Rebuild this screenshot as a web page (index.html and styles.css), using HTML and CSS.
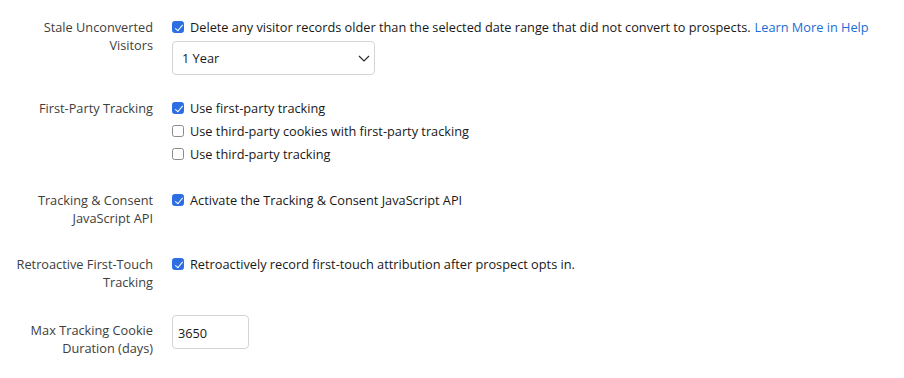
FILE: index.html
```html
<!DOCTYPE html>
<html lang="en">
<head>
<meta charset="utf-8">
<title>Tracking Settings</title>
<link rel="stylesheet" href="styles.css">
</head>
<body>
<div class="form">
  <div class="row">
    <div class="label">Stale Unconverted<br>Visitors</div>
    <div class="control">
      <label class="option"><span class="box checked"></span>Delete any visitor records older than the selected date range that did not convert to prospects. <a class="link" href="#">Learn More in Help</a></label>
      <div class="select">
        <span>1 Year</span>
        <svg class="chev" width="12" height="7" viewBox="0 0 12 7"><path d="M1 1l5 5 5-5" fill="none" stroke="#2b2b2b" stroke-width="1.2"/></svg>
      </div>
    </div>
  </div>
  <div class="row">
    <div class="label">First-Party Tracking</div>
    <div class="control options">
      <label class="option"><span class="box checked"></span>Use first-party tracking</label>
      <label class="option"><span class="box"></span>Use third-party cookies with first-party tracking</label>
      <label class="option"><span class="box"></span>Use third-party tracking</label>
    </div>
  </div>
  <div class="row spaced">
    <div class="label">Tracking &amp; Consent<br>JavaScript API</div>
    <div class="control">
      <label class="option"><span class="box checked"></span>Activate the Tracking &amp; Consent JavaScript API</label>
    </div>
  </div>
  <div class="row spaced">
    <div class="label">Retroactive First-Touch<br>Tracking</div>
    <div class="control">
      <label class="option"><span class="box checked"></span>Retroactively record first-touch attribution after prospect opts in.</label>
    </div>
  </div>
  <div class="row last">
    <div class="label label-input">Max Tracking Cookie<br>Duration (days)</div>
    <div class="control">
      <div class="input">3650</div>
    </div>
  </div>
</div>
</body>
</html>
```

FILE: styles.css
```css
* { box-sizing: border-box; }
html, body { margin: 0; padding: 0; background: #ffffff; }
body {
  font-family: "Open Sans", "Liberation Sans", sans-serif;
  font-size: 12.75px;
  line-height: 18px;
  color: #181818;
}
.form {
  display: flex;
  flex-direction: column;
  gap: 24px;
  padding-top: 18px;
}
.row {
  display: grid;
  grid-template-columns: 153px 1fr;
  column-gap: 19px;
  align-items: start;
}
.row.spaced { margin-top: 4px; }
.label {
  text-align: right;
  color: #3e3e3c;
}
.label-input { padding-top: 6px; }
.control { display: flex; flex-direction: column; align-items: flex-start; }
.options { gap: 5px; }
.option {
  display: flex;
  align-items: center;
  white-space: nowrap;
}
.box {
  width: 12px;
  height: 12px;
  border: 1px solid #8a8a8a;
  border-radius: 2.5px;
  margin-right: 6px;
  flex: none;
  background: #fff;
  position: relative;
}
.box.checked {
  background: #2d6fe3;
  border-color: #2d6fe3;
}
.box.checked::after {
  content: "";
  position: absolute;
  left: 3.5px;
  top: 0.5px;
  width: 3px;
  height: 7px;
  border-right: 1.8px solid #fff;
  border-bottom: 1.8px solid #fff;
  transform: rotate(40deg);
}
.link {
  color: #1b6dd6;
  text-decoration: none;
  margin-left: 4px;
}
.select {
  margin-top: 5px;
  width: 203px;
  height: 34px;
  border: 1px solid #d4d4d4;
  border-radius: 4px;
  display: flex;
  align-items: center;
  justify-content: space-between;
  padding: 0 4px 0 9px;
}
.input {
  width: 77px;
  height: 34px;
  border: 1px solid #d4d4d4;
  border-radius: 4px;
  display: flex;
  align-items: center;
  padding-left: 5px;
  padding-top: 1px;
}
```
